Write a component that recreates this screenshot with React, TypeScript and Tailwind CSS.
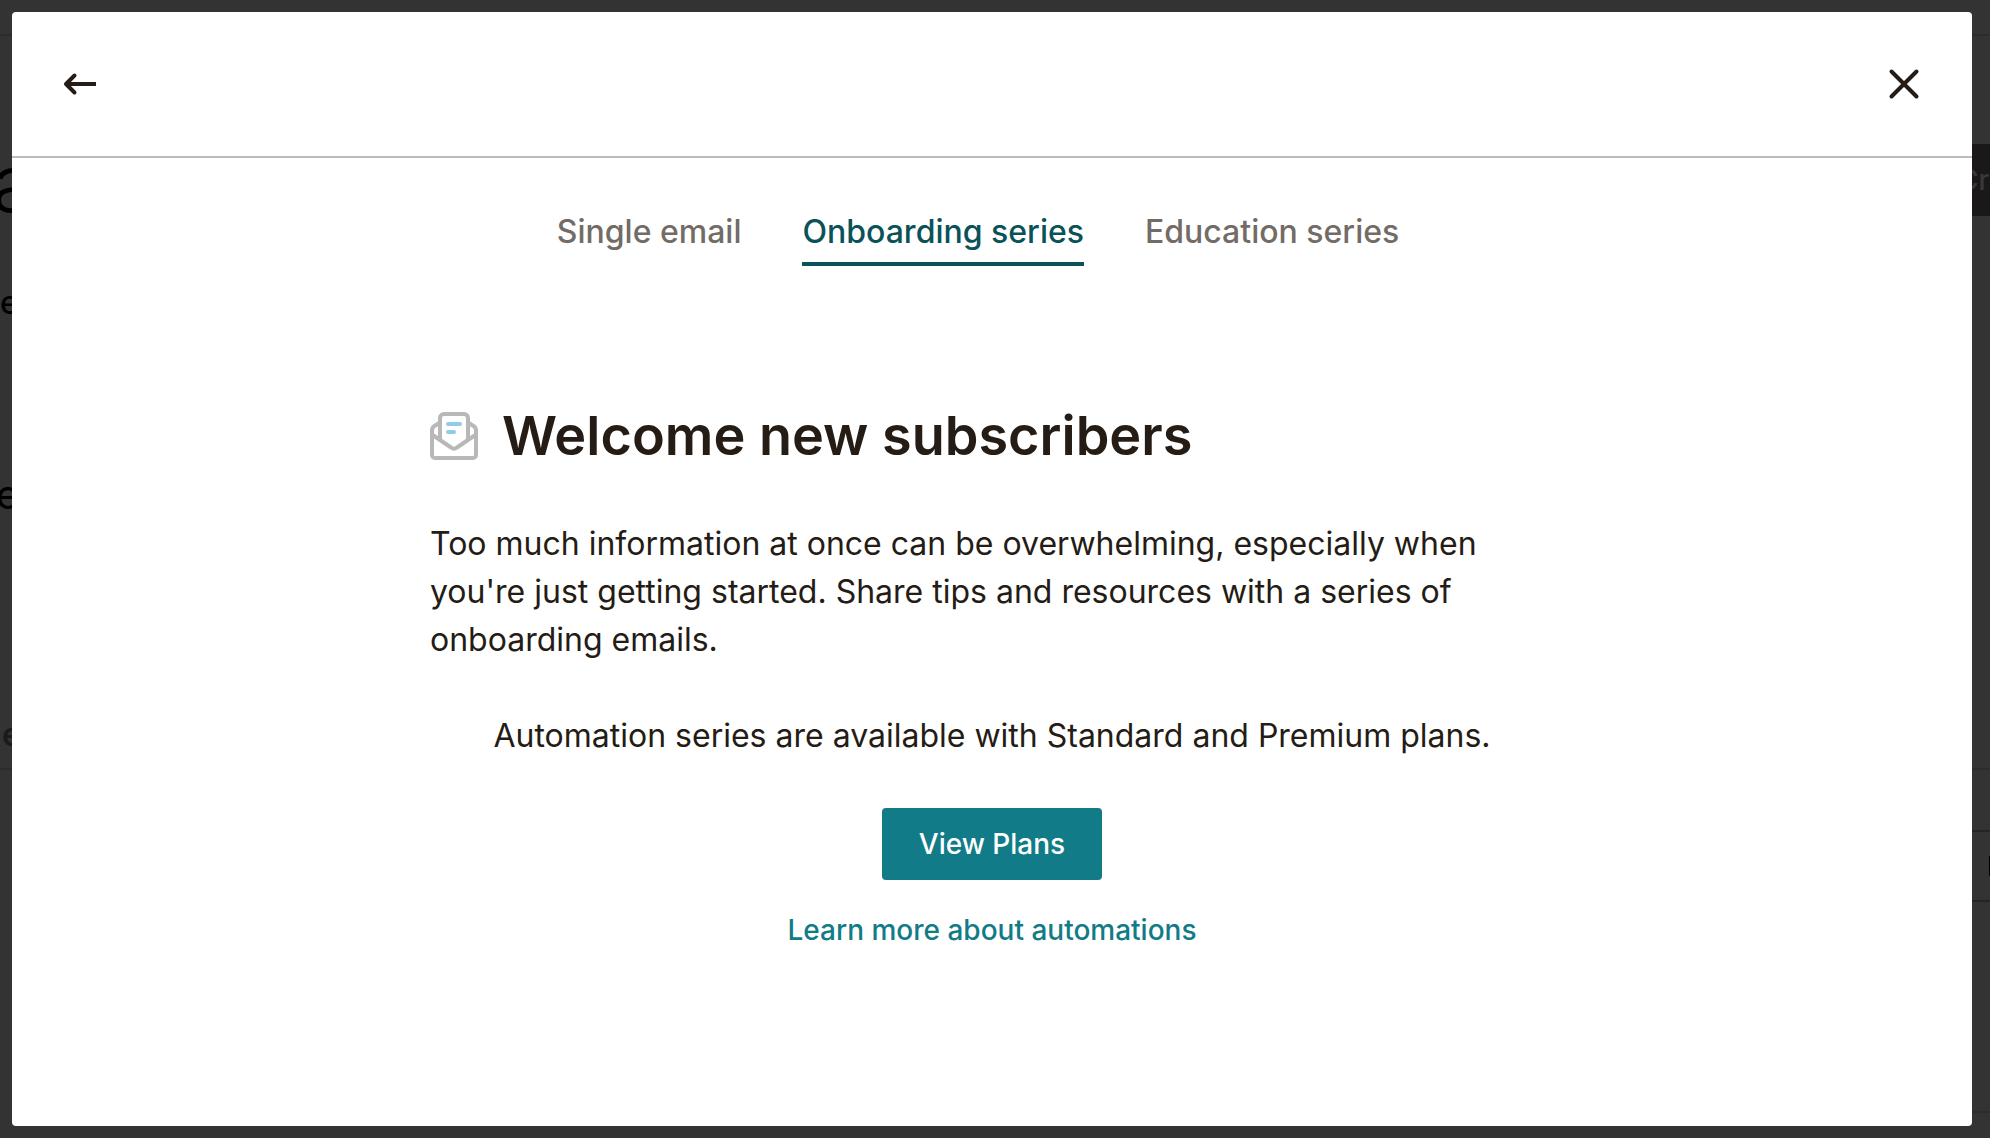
import React, { useState } from 'react';

interface Series {
    id: string;
    label: string;
    title: string;
    description: string;
}

const SERIES: Series[] = [
    {
        id: 'single',
        label: 'Single email',
        title: 'Welcome new subscribers',
        description: 'Introduce yourself to people when they subscribe to your audience.'
    },
    {
        id: 'onboarding',
        label: 'Onboarding series',
        title: 'Welcome new subscribers',
        description:
            "Too much information at once can be overwhelming, especially when you're just getting started. Share tips and resources with a series of onboarding emails."
    },
    {
        id: 'education',
        label: 'Education series',
        title: 'Welcome new subscribers',
        description: 'Teach your subscribers about your business with a series of emails.'
    }
];

const ArrowLeftIcon = () => (
    <svg className="w-9 h-9" viewBox="0 0 36 36" fill="none" stroke="currentColor" strokeWidth={4}>
        <path d="M34 18H5" />
        <path strokeLinecap="round" strokeLinejoin="round" d="M12.500 9.500L4 18L12.500 26.500" />
    </svg>
);

const CloseIcon = () => (
    <svg className="w-9 h-9" viewBox="0 0 36 36" fill="none" stroke="currentColor" strokeWidth={4} strokeLinecap="round">
        <path d="M5.5 5.5L30.5 30.5M30.5 5.5L5.5 30.5" />
    </svg>
);

const EnvelopeIcon = () => (
    <svg className="w-12 h-12 shrink-0" viewBox="0 0 48 48" fill="none" stroke="#b8b8b8" strokeWidth={4}>
        <path d="M10 27V6a4 4 0 0 1 4-4h20a4 4 0 0 1 4 4v21" />
        <path d="M10 10.500L4.500 14A5 5 0 0 0 2 18.500V43a3 3 0 0 0 3 3h38a3 3 0 0 0 3-3V18.500a5 5 0 0 0-2.500-4.500L38 10.500" />
        <path d="M2 22.500L21 35.500a5 5 0 0 0 6 0L46 22.500" />
        <path d="M18 12H30M18 20H24" stroke="#8fcbea" strokeLinecap="round" />
    </svg>
);

// Dimmed page that shows around the edges of the dialog
const PageBehind = () => (
    <div aria-hidden="true" className="fixed inset-0 flex flex-col overflow-hidden bg-[#333333] text-black">
        <div className="h-9 shrink-0 border-b-2 border-[#2c2c2c]" />
        <div className="flex h-[734px] shrink-0 justify-between border-b-2 border-[#2c2c2c]">
            <div className="flex flex-col items-start">
                <span className="-ml-2 mt-[99px] h-24 text-[80px] leading-24 font-light">a</span>
                <span className="mt-12 h-12 text-[32px] leading-12 font-medium">e</span>
                <span className="-ml-1 mt-36 h-12 text-[40px] leading-12">e</span>
                <span className="ml-0.5 mt-48 h-12 text-[32px] leading-12 font-semibold text-[#1c1a1a]">e</span>
            </div>
            <div className="mt-[108px] flex h-18 w-8 items-center overflow-hidden bg-[#1a1818] text-[28px] font-medium text-[#3a3838]">
                Create
            </div>
        </div>
        <div className="mt-15 flex h-18 shrink-0 justify-end">
            <div className="flex w-9 items-center justify-end border-y-2 border-[#252525]">
                <div className="h-5 w-px bg-black" />
            </div>
        </div>
        <div className="flex h-[211px] shrink-0 justify-end">
            <div className="w-9 border-b-2 border-[#2c2c2c]" />
        </div>
    </div>
);

export default function App() {
    const [activeId, setActiveId] = useState('onboarding');
    const active = SERIES.find((item) => item.id === activeId) ?? SERIES[1];

    return (
        <div className="font-[Inter,sans-serif] text-[#241c15]">
            <PageBehind />

            <div className="relative flex min-h-screen py-3 pr-[18px] pl-3">
                <div role="dialog" aria-modal="true" aria-labelledby="dialog-title" className="flex-1 rounded bg-white">
                    <header className="flex h-[146px] items-center justify-between border-b-2 border-[#bbbbbb] px-[50px]">
                        <button type="button" aria-label="Back">
                            <ArrowLeftIcon />
                        </button>
                        <button type="button" aria-label="Close">
                            <CloseIcon />
                        </button>
                    </header>

                    <nav role="tablist" className="mt-11 flex justify-center gap-[61px] pr-7">
                        {SERIES.map((item) => (
                            <button
                                key={item.id}
                                type="button"
                                role="tab"
                                aria-selected={item.id === activeId}
                                onClick={() => setActiveId(item.id)}
                                className={`border-b-4 pt-1 pb-1 text-[32px] leading-[52px] font-medium ${
                                    item.id === activeId
                                        ? 'border-[#0a5259] text-[#0a5259]'
                                        : 'border-transparent text-[#736c66]'
                                }`}
                            >
                                {item.label}
                            </button>
                        ))}
                    </nav>

                    <main className="mx-auto mt-[134px] max-w-[1124px]">
                        <div className="flex items-center gap-6">
                            <EnvelopeIcon />
                            <h1 id="dialog-title" className="text-[54px] leading-[72px] font-semibold">
                                {active.title}
                            </h1>
                        </div>

                        <p className="mt-12 max-w-[1080px] text-[32px] leading-12">{active.description}</p>

                        <div className="mt-12 flex flex-col items-center">
                            <p className="text-[32px] leading-12">
                                Automation series are available with Standard and Premium plans.
                            </p>
                            <button
                                type="button"
                                className="mt-12 h-18 w-[220px] rounded bg-[#117c87] text-[28px] font-medium text-white"
                            >
                                View Plans
                            </button>
                            <a href="#automations" className="mt-[30px] text-[28px] leading-10 font-medium text-[#117c87]">
                                Learn more about automations
                            </a>
                        </div>
                    </main>
                </div>
            </div>
        </div>
    );
}
